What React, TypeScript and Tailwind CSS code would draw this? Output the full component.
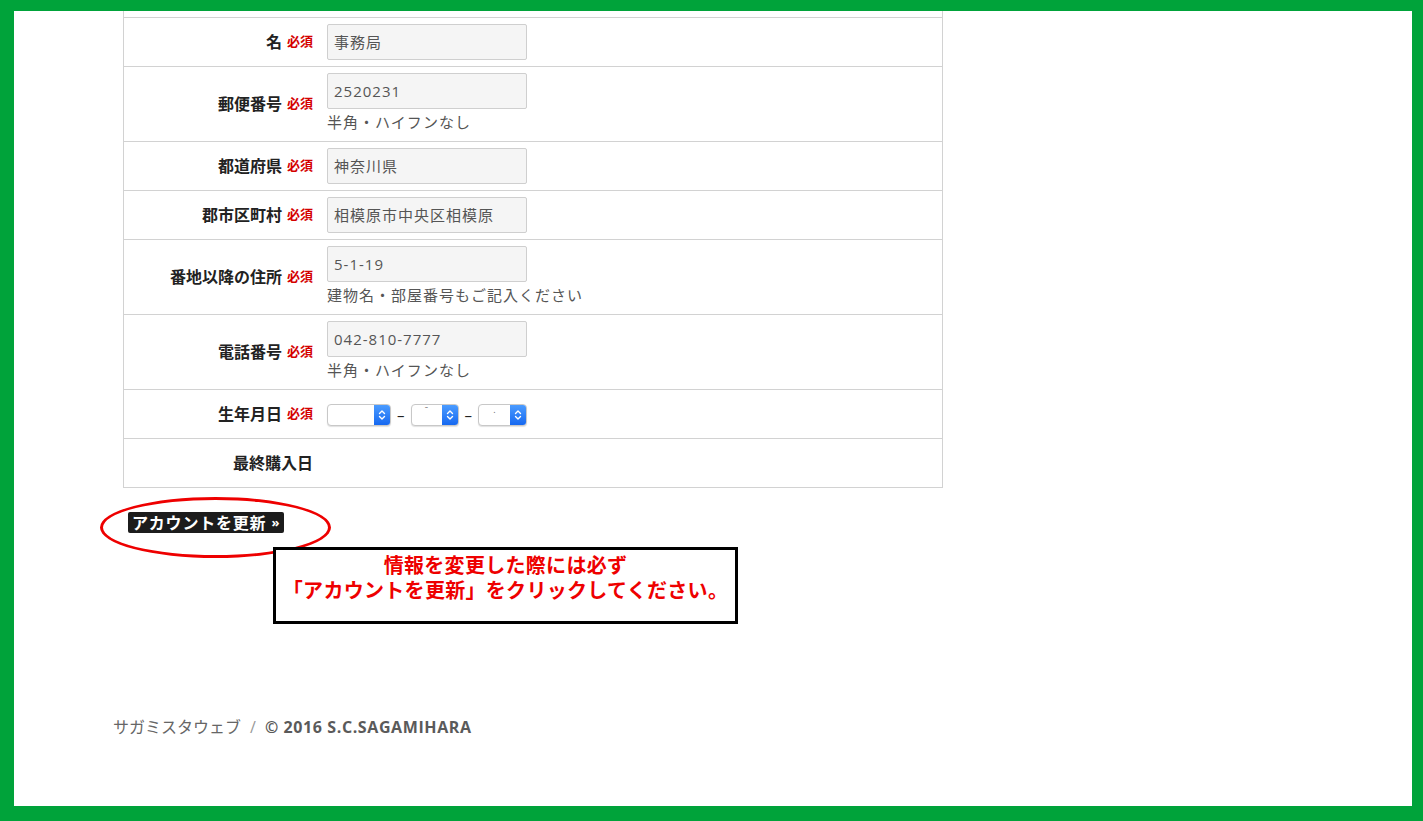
import React from 'react';

const jp = "font-['Open_Sans','Noto_Sans_CJK_JP',sans-serif]";

type Row = {
  label: string;
  required?: boolean;
  value?: string;
  help?: string;
  kind?: 'input' | 'date' | 'empty';
};

const rows: Row[] = [
  { label: '名', required: true, value: '事務局' },
  { label: '郵便番号', required: true, value: '2520231', help: '半角・ハイフンなし' },
  { label: '都道府県', required: true, value: '神奈川県' },
  { label: '郡市区町村', required: true, value: '相模原市中央区相模原' },
  { label: '番地以降の住所', required: true, value: '5-1-19', help: '建物名・部屋番号もご記入ください' },
  { label: '電話番号', required: true, value: '042-810-7777', help: '半角・ハイフンなし' },
  { label: '生年月日', required: true, kind: 'date' },
  { label: '最終購入日', kind: 'empty' },
];

const SelectBox = ({ width, mark }: { width: string; mark?: string }) => (
  <div className={`flex h-[22px] ${width} overflow-hidden rounded-[4px] border border-[#c8c8c8] bg-white shadow-[0_1px_1px_rgba(0,0,0,0.12)]`}>
    <div className="flex flex-1 items-start justify-center text-[9px] leading-[10px] text-[#666]">{mark}</div>
    <div className="flex w-[16px] items-center justify-center bg-gradient-to-b from-[#4a9bff] to-[#1668f0]">
      <svg width="8" height="12" viewBox="0 0 8 12" fill="none" stroke="white" strokeWidth="1.4" strokeLinecap="round" strokeLinejoin="round">
        <path d="M1.5 4.5 L4 2 L6.5 4.5" />
        <path d="M1.5 7.5 L4 10 L6.5 7.5" />
      </svg>
    </div>
  </div>
);

const FieldRow = ({ row }: { row: Row }) => (
  <div className="flex border-t border-[#d2d2d2]">
    <div className="flex w-[197px] shrink-0 items-center justify-end pr-[8px]">
      <span className="text-[16px] font-bold text-[#222]">{row.label}</span>
      {row.required && <span className="ml-[5px] text-[13px] font-bold text-[#d40000]">必須</span>}
    </div>
    <div className="py-[6px] pl-[6px]">
      {row.kind === 'date' ? (
        <div className="flex h-[36px] items-center gap-[6px] pt-[2px]">
          <SelectBox width="w-[64px]" />
          <span className="text-[15px] text-[#222]">–</span>
          <SelectBox width="w-[48px]" mark="ˉ" />
          <span className="text-[15px] text-[#222]">–</span>
          <SelectBox width="w-[49px]" mark="." />
        </div>
      ) : row.kind === 'empty' ? (
        <div className="h-[36px]" />
      ) : (
        <>
          <div className="flex h-[36px] w-[200px] items-center rounded-[2px] border border-[#cfcfcf] bg-[#f5f5f5] pl-[6px] text-[15px] tracking-[1px] text-[#555]">
            {row.value}
          </div>
          {row.help && <div className="text-[15px] leading-[26px] tracking-[1px] text-[#555]">{row.help}</div>}
        </>
      )}
    </div>
  </div>
);

export default function App() {
  return (
    <div className={`h-[821px] w-[1423px] overflow-hidden border-t-[11px] border-r-[11px] border-b-[15px] border-l-[14px] border-[#00a33a] bg-white ${jp}`}>
      <div className="ml-[109px] w-[820px] border-x border-b border-[#d2d2d2]">
        <div className="h-[6px]" />
        {rows.map((r) => (
          <FieldRow key={r.label} row={r} />
        ))}
      </div>

      <div className="relative h-[222px]">
        <div className="ml-[114px] pt-[24px]">
          <button className="flex h-[21px] items-center rounded-[2px] bg-[#1c1c1c] px-[4px] text-[16px] font-bold tracking-[0.8px] text-white">
            アカウントを更新<span className="ml-[5px] text-[13px]">»</span>
          </button>
        </div>

        {/* annotation ellipse */}
        <div className="absolute top-[9px] left-[86px] h-[61px] w-[231px] rounded-[50%] border-[3px] border-[#ee0000]" />

        {/* annotation box */}
        <div className="absolute top-[59px] left-[259px] flex h-[77px] w-[465px] flex-col items-center border-[3px] border-black bg-white pt-[3px] text-[20px] leading-[25px] font-bold tracking-[0.3px] text-[#ee0000]">
          <span>情報を変更した際には必ず</span>
          <span>「アカウントを更新」をクリックしてください。</span>
        </div>
      </div>

      <div className="ml-[99px] mt-[5px] flex items-center text-[16px] text-[#666]">
        <span>サガミスタウェブ</span>
        <span className="mx-[9px] text-[#999]">/</span>
        <span className="font-bold tracking-[0.6px] text-[#5a5a5a]">© 2016 S.C.SAGAMIHARA</span>
      </div>
    </div>
  );
}
